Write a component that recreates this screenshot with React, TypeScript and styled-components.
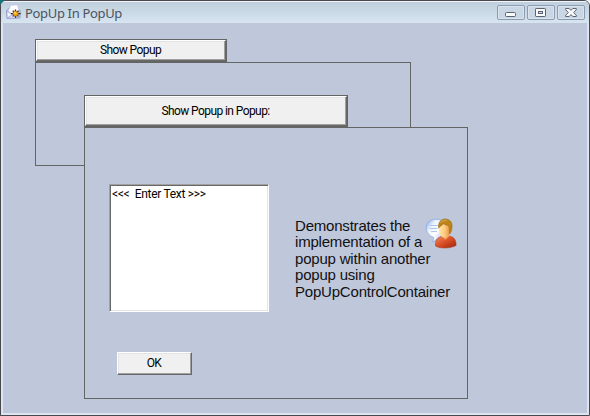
import React from "react";
import styled, { createGlobalStyle, css } from "styled-components";

const GlobalStyle = createGlobalStyle`
  * { box-sizing: border-box; }
  body { margin: 0; background: #4b4b4f; overflow: hidden; }
`;

const Corner = styled.div`
  width: 590px;
  height: 416px;
  background: linear-gradient(90deg, #087b7b 0 20px, #eef2f4 20px);
`;

const Window = styled.div`
  width: 590px;
  height: 416px;
  display: flex;
  flex-direction: column;
  border: 1px solid #4a4a4e;
  border-radius: 6px 6px 0 0;
  background: #dce5f2;
  overflow: hidden;
  font-family: Roboto, "Liberation Sans", sans-serif;
`;

const TitleBar = styled.header`
  height: 22px;
  flex: none;
  display: flex;
  align-items: flex-start;
  padding: 3px 4px 0 5px;
  background: linear-gradient(#f1f5f9 0 1px, #bfcfdd 1px, #c9d9e6 50%, #d8e5f1);
`;

const Title = styled.h1`
  flex: 1;
  margin: 0 0 0 4px;
  font: 400 13px/18px "Noto Sans", sans-serif;
  letter-spacing: -0.33px;
  color: #4b5360;
  white-space: nowrap;
`;

const Controls = styled.div`
  display: flex;
  gap: 2px;
  margin-top: 1px;
`;

const ControlButton = styled.button`
  width: 28px;
  height: 15px;
  padding: 0;
  display: grid;
  place-items: center;
  border: 1px solid #8c9bb0;
  border-radius: 2px;
  background: #c9d7e5;
  box-shadow: inset 0 0 0 1px #d9e4ef;
  svg { display: block; }
`;

const Client = styled.main`
  position: relative;
  flex: 1;
  margin: 0 2px 2px;
  padding: 16px 32px;
  background: #bfc7db;
`;

const bevel = css`
  border: 1px solid;
  border-color: #fff #696969 #696969 #fff;
  box-shadow: inset -1px -1px #a0a0a0, inset 1px 1px #e3e3e3;
`;

const Button = styled.button<{ $width: number; $height: number }>`
  display: block;
  width: ${(p) => p.$width}px;
  height: ${(p) => p.$height}px;
  padding: 0 1px 1px 0;
  background: #f0f0f0;
  color: #000;
  font: 400 12px/14px Roboto, sans-serif;
  letter-spacing: -0.58px;
  white-space: nowrap;
  ${bevel}
`;

const DefaultFrame = styled.div`
  width: max-content;
  border: 1px solid #646464;
`;

const Panel = styled.section<{ $width: number; $height: number }>`
  width: ${(p) => p.$width}px;
  height: ${(p) => p.$height}px;
  border: 1px solid #646464;
  background: #bfc7db;
`;

const NestedPopup = styled.div`
  position: absolute;
  left: 81px;
  top: 72px;
`;

const PopupBody = styled.div`
  display: grid;
  grid-template-columns: 160px 1fr;
  column-gap: 26px;
  padding: 56px 0 0 24px;
`;

const TextBox = styled.div`
  height: 128px;
  padding: 1px 2px;
  border: 1px solid;
  border-color: #a0a0a0 #fff #fff #a0a0a0;
  box-shadow: inset 1px 1px #696969, inset -1px -1px #e3e3e3;
  background: #fff;
  color: #000;
  font: 400 12px/17px Roboto, sans-serif;
  letter-spacing: -0.3px;
  white-space: pre;
`;

const Note = styled.div`
  position: relative;
  margin-top: 34px;
`;

const Description = styled.p`
  margin: 0;
  font: 400 15px/16.4px "Liberation Sans", sans-serif;
  letter-spacing: -0.2px;
  color: #111;
  white-space: nowrap;
`;

const UserBadge = styled.div`
  position: absolute;
  left: 130px;
  top: 0;
  svg { display: block; }
`;

const Actions = styled.div`
  padding: 40px 0 0 32px;
`;

const MailIcon = () => (
  <svg width="15" height="16" viewBox="0 0 15 16">
    <path d="M.6 6.5 4 3.2h7l3 3.3V14l-13 .5Z" fill="#c9cdf0" stroke="#8a8fc0" strokeWidth=".8" />
    <path d="M2.2 7 4.6 1.3l6.8-.6 1.8 5.6-6.4 4Z" fill="#fff" stroke="#b9bfe4" strokeWidth=".7" />
    <path d="M1 7.2 6.4 10.6 1.2 14.2Z" fill="#f3f4ff" stroke="#969cca" strokeWidth=".6" />
    <path d="M1.2 14.2 6.4 10.6l4 3.4Z" fill="#dcdff8" stroke="#969cca" strokeWidth=".5" />
    <path d="M9.5 5.4v8.4M5 9.6h9.6M6.7 6.8l5.8 5.6M12.5 6.8l-5.8 5.6" stroke="#2b2217" strokeWidth="1.2" />
    <circle cx="9.6" cy="9.6" r="2.7" fill="#f0a818" stroke="#8c5605" strokeWidth=".6" />
    <circle cx="9" cy="8.9" r=".9" fill="#ffe06a" />
  </svg>
);

const UserIcon = () => (
  <svg width="32" height="31" viewBox="0 0 32 31">
    <defs>
      <linearGradient id="bubble" x1="0" y1=".2" x2="1" y2="1"><stop stopColor="#9ab8ee" /><stop offset=".22" stopColor="#eaf3ff" /><stop offset=".5" stopColor="#ffffff" /><stop offset="1" stopColor="#7ea6ea" /></linearGradient>
      <linearGradient id="shirt" x2="1" y2="1"><stop stopColor="#f09067" /><stop offset=".45" stopColor="#dc5228" /><stop offset="1" stopColor="#9c2309" /></linearGradient>
      <linearGradient id="face" x2="1"><stop stopColor="#ffe6a6" /><stop offset=".55" stopColor="#ffc87c" /><stop offset="1" stopColor="#e8923f" /></linearGradient>
    </defs>
    <path d="M11 1.2C5 1.2 1 5 1.2 10c.2 4.5 3 8 7.3 9.2L7.8 24l5.7-3.6c5-.6 7.5-4.4 7.5-9.4 0-6-4.200-9.800-10-9.800Z" fill="url(#bubble)" stroke="#8fabe2" strokeWidth=".8" />
    <path d="M5 7.500h8M4.500 10.500h8M6 13.500h6" stroke="#b2c5e8" />
    <path d="M10.500 28C10.300 22 12.500 19.400 17 18.300h8c4.500 1 6.300 4.500 6 9.200-5 2.900-16 3.400-20.500.5Z" fill="url(#shirt)" stroke="#b13a1c" strokeWidth=".6" />
    <path d="M16.500 18.300l4 3.400 3.600-3.400v-3h-7Z" fill="#f4a65c" />
    <ellipse cx="19.500" cy="12.300" rx="5.500" ry="7.200" fill="url(#face)" />
    <path d="M13.600 10.300C12.800 4.500 15.800 1 20 1c5.300 0 7.800 3.800 7 9-.4 3-1.300 5-2.600 6.200-.1-3 .3-6-.8-8.500-2.700-.8-4.200-1-5.200-2-1.300 2-3.500 2.200-4.800 4.600Z" fill="#bc8417" stroke="#936518" strokeWidth=".5" />
    <path d="M15.500 5C17 2.500 20 2 22 3" fill="none" stroke="#dfb14d" strokeWidth=".9" />
  </svg>
);

const MinimizeIcon = () => (
  <svg width="12" height="11" viewBox="0 0 12 11"><rect x=".5" y="5.5" width="10" height="4" rx="1" fill="#fafafa" stroke="#5b6271" /></svg>
);
const MaximizeIcon = () => (
  <svg width="12" height="11" viewBox="0 0 12 11"><rect x=".5" y="1.500" width="10" height="8" rx=".7" fill="#fafafa" stroke="#5b6271" /><rect x="3.500" y="4.500" width="4" height="2" fill="#c9d7e5" stroke="#5b6271" /></svg>
);
const CloseIcon = () => (
  <svg width="12" height="11" viewBox="0 0 12 11"><path d="M.7 1.500h3.500L6 3.400l1.800-1.900h3.500v1.300L8.600 5.500l2.700 2.700v1.300H7.800L6 7.600 4.200 9.500H.7V8.200l2.700-2.700L.7 2.800Z" fill="#fafafa" stroke="#5b6271" /></svg>
);

export default function App() {
  return (
    <Corner>
      <GlobalStyle />
      <Window>
        <TitleBar>
          <MailIcon />
          <Title>PopUp In PopUp</Title>
          <Controls>
            <ControlButton aria-label="Minimize"><MinimizeIcon /></ControlButton>
            <ControlButton aria-label="Maximize"><MaximizeIcon /></ControlButton>
            <ControlButton aria-label="Close"><CloseIcon /></ControlButton>
          </Controls>
        </TitleBar>
        <Client>
          <DefaultFrame><Button $width={190} $height={21}>Show Popup</Button></DefaultFrame>
          <Panel $width={376} $height={104} />
          <NestedPopup>
            <DefaultFrame><Button $width={262} $height={30}>Show Popup in Popup:</Button></DefaultFrame>
            <Panel $width={384} $height={272}>
              <PopupBody>
                <TextBox>{"<<<  Enter Text >>>"}</TextBox>
                <Note>
                  <Description>
                    Demonstrates the<br />implementation of a<br />popup within another<br />popup using<br />PopUpControlContainer
                  </Description>
                  <UserBadge><UserIcon /></UserBadge>
                </Note>
              </PopupBody>
              <Actions><Button $width={75} $height={23}>OK</Button></Actions>
            </Panel>
          </NestedPopup>
        </Client>
      </Window>
    </Corner>
  );
}
